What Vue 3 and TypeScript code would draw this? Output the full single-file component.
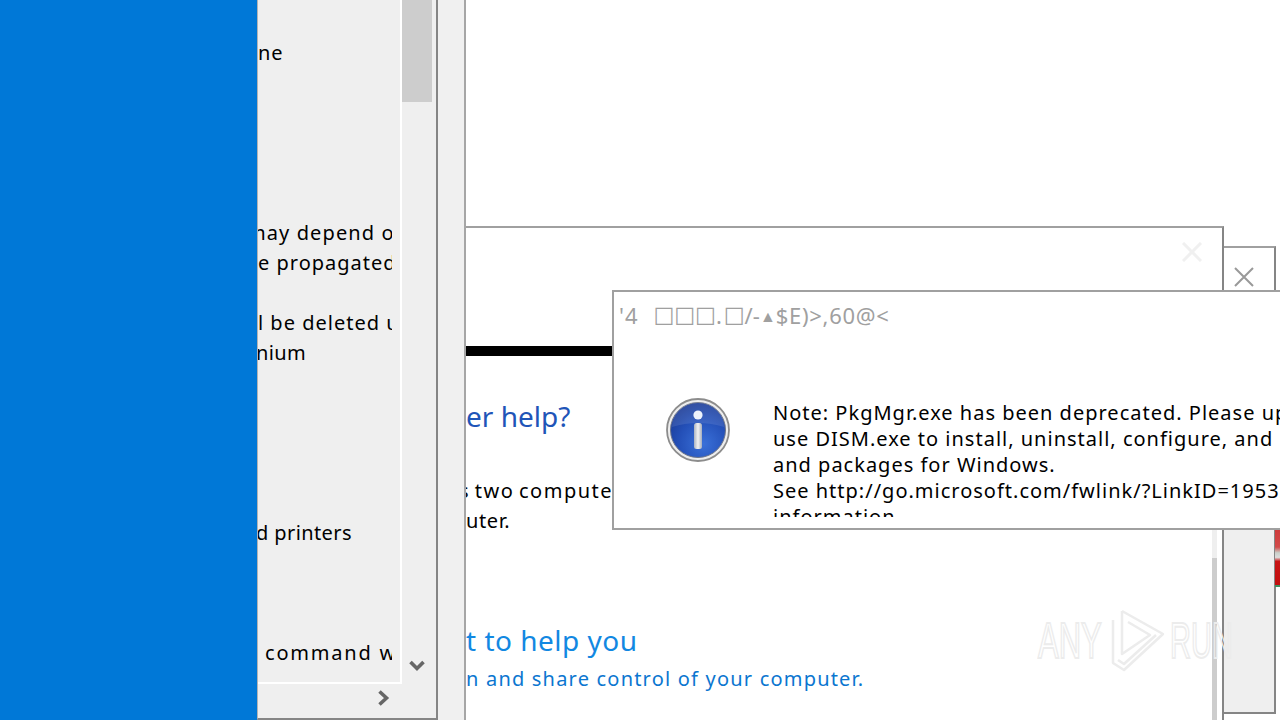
<script setup lang="ts">
const listRows: { text: string; cls: string }[] = [
  { text: 'ne', cls: 'row' },
  { text: '', cls: 'row' },
  { text: '', cls: 'row' },
  { text: '', cls: 'row' },
  { text: '', cls: 'row' },
  { text: '', cls: 'row' },
  { text: 'may depend o', cls: 'row cut' },
  { text: 'e propagated', cls: 'row' },
  { text: '', cls: 'row' },
  { text: 'l be deleted u', cls: 'row' },
  { text: 'nium', cls: 'row tight' },
  { text: '', cls: 'row' },
  { text: '', cls: 'row' },
  { text: '', cls: 'row' },
  { text: '', cls: 'row' },
  { text: '', cls: 'row' },
  { text: 'd printers', cls: 'row tight' },
  { text: '', cls: 'row' },
  { text: '', cls: 'row' },
  { text: '', cls: 'row' },
  { text: 'command w', cls: 'row ind' },
]
const noteLines: string[] = [
  'Note: PkgMgr.exe has been deprecated. Please update your scripts to',
  'use DISM.exe to install, uninstall, configure, and update features',
  'and packages for Windows.',
  'See http://go.microsoft.com/fwlink/?LinkID=195329 for more',
  'information.',
]
</script>

<template>
  <div class="screen">
    <aside class="sidebar"></aside>

    <section class="panel">
      <div class="panel-top">
        <div class="list">
          <div class="list-clip">
            <div v-for="(r, i) in listRows" :key="i" :class="r.cls">{{ r.text }}</div>
          </div>
        </div>
        <div class="vscroll">
          <div class="thumb"></div>
          <svg class="chev-down" width="16" height="12" viewBox="0 0 16 12">
            <path d="M1.5 2 L8 8.5 L14.5 2" fill="none" stroke="#666" stroke-width="3.6" />
          </svg>
        </div>
      </div>
      <div class="hscroll">
        <svg width="14" height="16" viewBox="0 0 14 16">
          <path d="M2.5 1.5 L9.5 8 L2.5 14.5" fill="none" stroke="#666" stroke-width="3.6" />
        </svg>
      </div>
    </section>

    <div class="strip"></div>

    <main class="desk">
      <div class="win-small">
        <svg class="x-small" width="22" height="22" viewBox="0 0 22 22">
          <path d="M2 2 L20 20 M20 2 L2 20" stroke="#999" stroke-width="2" fill="none" />
        </svg>
        <div class="win-small-fill"></div>
      </div>

      <div class="win-main">
        <svg class="x-faint" width="20" height="20" viewBox="0 0 20 20">
          <path d="M1 1 L19 19 M19 1 L1 19" stroke="#f0f0f0" stroke-width="3" fill="none" />
        </svg>
        <div class="black-bar"></div>
        <div class="help-a">er help?</div>
        <div class="para para-cut">s two compute</div>
        <div class="para para-tight">uter.</div>
        <div class="help-b">t to help you</div>
        <div class="help-c">n and share control of your computer.</div>
        <div class="win-scroll"><div class="win-thumb"></div></div>
      </div>

      <div class="dialog">
        <div class="dlg-title">
          <span class="t-a">'4</span>
          <span class="t-box t-b">□□□</span><span>.</span>
          <span class="t-box t-c">□</span><span>/-</span><span class="tiny">▲</span><span class="t-d">$E)&gt;,60@&lt;</span>
        </div>
        <div class="dlg-body">
          <svg class="info" width="66" height="66" viewBox="0 0 66 66">
            <defs>
              <radialGradient id="disc" cx="60%" cy="75%" r="75%">
                <stop offset="0%" stop-color="#3a70d8" />
                <stop offset="60%" stop-color="#2450b8" />
                <stop offset="100%" stop-color="#1b3c98" />
              </radialGradient>
              <linearGradient id="stem" x1="0" y1="0" x2="1" y2="0">
                <stop offset="0%" stop-color="#aab2c0" />
                <stop offset="50%" stop-color="#f2f2f2" />
                <stop offset="100%" stop-color="#a6aebc" />
              </linearGradient>
            </defs>
            <circle cx="33" cy="33" r="31" fill="#ededed" stroke="#8c8c8c" stroke-width="1.8" />
            <circle cx="33" cy="33" r="27.5" fill="url(#disc)" stroke="#6f7688" stroke-width="1" />
            <path d="M7 30 A26 26 0 0 1 59 30 Q33 22 7 30 Z" fill="#ffffff" fill-opacity="0.1" />
            <circle cx="33" cy="18" r="4.6" fill="#eef3fb" />
            <rect x="29" y="26" width="8" height="26" rx="2.5" fill="url(#stem)" />
          </svg>
          <div class="note">
            <div v-for="(l, i) in noteLines" :key="i" class="note-line">{{ l }}</div>
          </div>
        </div>
      </div>

      <div class="red-tab"></div>
    </main>

    <div class="mark">
      <span class="mark-txt any">ANY</span>
      <svg width="62" height="66" viewBox="0 0 62 66" class="mark-logo">
        <path d="M14 3 L55 26 L16 62 L5 55 V12 M14 3 V46 L42 27 L20 14 M10 52 L16 56 L48 27" fill="none" stroke="#ececec" stroke-width="2.5" stroke-linejoin="round" />
      </svg>
      <span class="mark-txt run">RUN</span>
    </div>
  </div>
</template>

<style>
html, body { margin: 0; background: #fff; }
</style>

<style scoped>
.screen {
  position: relative;
  width: 1280px;
  height: 720px;
  overflow: hidden;
  display: flex;
  background: #fff;
  font-family: "Noto Sans", "Open Sans", sans-serif;
}
.sidebar { width: 257px; flex: none; background: #0078d7; }

.panel {
  width: 178px;
  height: 718px;
  flex: none;
  display: flex;
  flex-direction: column;
  background: #efefef;
  border-left: 1px solid #b4b4b4;
  border-right: 2px solid #858585;
  border-bottom: 2px solid #858585;
}
.panel-top { display: flex; height: 684px; }
.list {
  width: 142px;
  flex: none;
  border-right: 2px solid #fff;
  border-bottom: 2px solid #fff;
  padding-top: 38px;
  height: 644px;
  overflow: hidden;
}
.list-clip { width: 134px; overflow: hidden; }
.row {
  height: 30px;
  line-height: 30px;
  font-size: 20px;
  letter-spacing: 1px;
  white-space: nowrap;
  color: #000;
}
.cut { margin-left: -11px; letter-spacing: 1.1px; }
.tight { letter-spacing: 0.4px; margin-left: -2px; }
.ind { padding-left: 7px; letter-spacing: 1.8px; }

.vscroll { position: relative; width: 34px; }
.thumb { width: 30px; height: 102px; background: #cdcdcd; }
.chev-down { position: absolute; left: 7px; top: 660px; }
.hscroll {
  flex: 1;
  display: flex;
  align-items: center;
  justify-content: flex-end;
  padding: 0 45px 6px 0;
}

.strip {
  width: 26px;
  flex: none;
  background: #f0f0f0;
  border-right: 2px solid #a6a6a6;
}
.desk { position: relative; flex: 1; }

.win-small {
  position: absolute;
  left: 758px;
  top: 246px;
  width: 50px;
  height: 464px;
  border: 2px solid #a0a0a0;
  border-left: none;
  border-bottom-color: #858585;
  border-right-color: #858585;
  background: #fff;
}
.x-small { position: absolute; left: 9px; top: 18px; }
.win-small-fill {
  position: absolute;
  left: 0;
  right: 0;
  top: 282px;
  bottom: 0;
  background: #efefef;
}

.win-main {
  position: absolute;
  left: 0;
  top: 226px;
  width: 756px;
  height: 494px;
  overflow: hidden;
  border-top: 2px solid #a0a0a0;
  border-right: 2px solid #858585;
  background: #fff;
}
.x-faint { position: absolute; left: 716px; top: 14px; }
.black-bar { height: 10px; width: 148px; margin-top: 118px; background: #000; }
.help-a {
  margin-top: 41px;
  font-size: 28px;
  line-height: 38px;
  color: #1f55b8;
  white-space: nowrap;
}
.para {
  font-size: 20px;
  line-height: 30px;
  color: #000;
  letter-spacing: 1px;
  white-space: nowrap;
}
.help-a + .para { margin-top: 41px; }
.para-cut { margin-left: -7px; letter-spacing: 1.5px; word-spacing: -2px; }
.para-tight { letter-spacing: 0.6px; }
.help-b {
  margin-top: 85px;
  font-size: 28px;
  line-height: 38px;
  letter-spacing: 0.5px;
  color: #1288e2;
  white-space: nowrap;
}
.help-c {
  margin-top: 5px;
  font-size: 20px;
  line-height: 30px;
  color: #0b76d0;
  letter-spacing: 1.2px;
  white-space: nowrap;
}
.win-scroll {
  position: absolute;
  left: 746px;
  top: 302px;
  width: 5px;
  bottom: 0;
  background: #efefef;
}
.win-thumb { margin-top: 28px; height: 200px; background: #cdcdcd; }

.dialog {
  position: absolute;
  left: 146px;
  top: 290px;
  width: 760px;
  height: 236px;
  border: 2px solid #a0a0a0;
  background: #fff;
  overflow: hidden;
}
.dlg-title {
  display: flex;
  align-items: center;
  padding-left: 5px;
  height: 46px;
  font-size: 22px;
  color: #a0a0a0;
  white-space: nowrap;
}
.t-a { letter-spacing: 1px; }
.t-box { font-size: 22px; font-family: "DejaVu Sans", sans-serif; line-height: 1; }
.t-b { margin-left: 15px; }
.t-c { margin-left: 2px; }
.tiny { font-size: 16px; margin: 2px 0 0; }
.t-d { letter-spacing: 0.7px; }
.dlg-body { display: flex; padding: 59px 0 0 51px; }
.info { flex: none; margin-right: 42px; }
.note {
  height: 117px;
  margin-top: 3px;
  overflow: hidden;
}
.note-line {
  height: 26px;
  line-height: 26px;
  font-size: 20px;
  letter-spacing: 1px;
  white-space: nowrap;
  color: #000;
}

.red-tab {
  position: absolute;
  left: 809px;
  top: 530px;
  width: 5px;
  height: 57px;
  background: linear-gradient(#cf3c3c 0, #d24a4a 30%, #c9cfc9 40%, #dcdcdc 48%, #c81414 55%, #c21010 96%, #3f8f60 97%);
}

.mark {
  position: absolute;
  left: 1038px;
  top: 608px;
  display: flex;
  align-items: center;
  height: 66px;
  pointer-events: none;
}
.mark-txt {
  font-family: "Liberation Sans", sans-serif;
  font-size: 50px;
  line-height: 66px;
  color: transparent;
  -webkit-text-stroke: 2px #ececec;
  display: inline-block;
  transform-origin: left center;
  transform: scaleX(0.62);
  white-space: nowrap;
}
.any { width: 70px; }
.run { width: 62px; transform: scaleX(0.58); }
.mark-logo { flex: none; }
</style>
